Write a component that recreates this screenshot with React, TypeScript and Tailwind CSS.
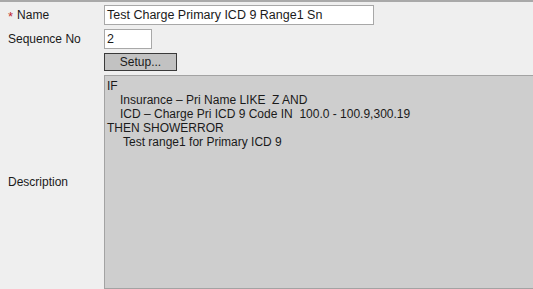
import React from 'react';

export default function App() {
  const font = { fontFamily: '"Liberation Sans", Arial, sans-serif' };
  return (
    <div
      className="w-[533px] h-[289px] overflow-hidden bg-[#efefef] border-t-2 border-[#a9a9a9] text-[12px] text-[#1a1a1a]"
      style={font}
    >
      <div className="flex flex-col pt-[3px]">
        {/* Name */}
        <div className="flex items-center h-[20px]">
          <div className="w-[104px] shrink-0 pl-[8px] flex items-center">
            <span className="text-[#c0272d] text-[13px] leading-none mr-[4px] mt-[2px]">*</span>
            <span>Name</span>
          </div>
          <div className="w-[270px] h-[20px] shrink-0 bg-white border border-[#a8a8a8] px-[2px] flex items-center text-[12.5px]">
            Test Charge Primary ICD 9 Range1 Sn
          </div>
        </div>

        {/* Sequence */}
        <div className="flex items-center h-[20px] mt-[4px]">
          <div className="w-[104px] shrink-0 pl-[8px]">Sequence No</div>
          <div className="w-[48px] h-[20px] shrink-0 bg-white border border-[#a8a8a8] px-[2px] flex items-center text-[12.5px]">
            2
          </div>
        </div>

        {/* Setup */}
        <div className="flex items-center mt-[4px]">
          <div className="w-[104px] shrink-0" />
          <button
            className="w-[73px] h-[18px] shrink-0 bg-[#c2c2c2] border border-[#3a3a3a] text-[12px] leading-none text-[#1a1a1a] flex items-center justify-center"
            style={font}
          >
            Setup...
          </button>
        </div>

        {/* Description */}
        <div className="flex items-center mt-[4px]">
          <div className="w-[104px] shrink-0 pl-[8px]">Description</div>
          <div className="w-[440px] h-[214px] shrink-0 bg-[#cecece] border border-[#a3a3a3] pl-[2px] pt-[3px] leading-[14px] whitespace-pre">
            <div>IF</div>
            <div className="pl-[13px]">Insurance – Pri Name LIKE  Z AND</div>
            <div className="pl-[13px]">ICD – Charge Pri ICD 9 Code IN  100.0 - 100.9,300.19</div>
            <div>THEN SHOWERROR</div>
            <div className="pl-[16px]">Test range1 for Primary ICD 9</div>
          </div>
        </div>
      </div>
    </div>
  );
}
